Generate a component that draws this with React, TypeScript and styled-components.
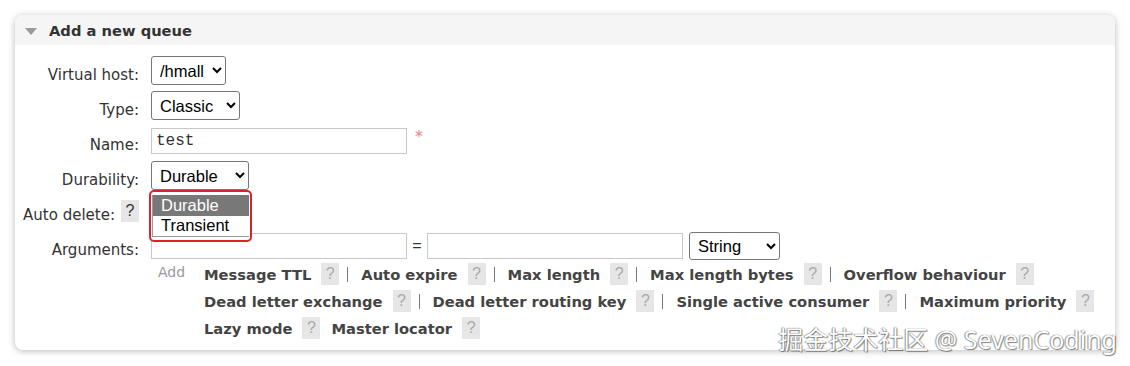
import styled, { createGlobalStyle } from 'styled-components'

const GlobalStyle = createGlobalStyle`
  html, body {
    margin: 0;
    background: #fff;
  }
  body {
    font-family: "DejaVu Sans", Verdana, sans-serif;
    color: #333;
  }
`

interface ArgLine {
    names: string[];
    sep: boolean;
}

const argLines: ArgLine[] = [
    { names: ['Message TTL', 'Auto expire', 'Max length', 'Max length bytes', 'Overflow behaviour'], sep: true },
    { names: ['Dead letter exchange', 'Dead letter routing key', 'Single active consumer', 'Maximum priority'], sep: true },
    { names: ['Lazy mode', 'Master locator'], sep: false },
]

function App() {
    return (
        <Page>
            <GlobalStyle />
            <Card>
                <Header>
                    <Triangle />
                    <HeaderTitle>Add a new queue</HeaderTitle>
                </Header>

                <Body>
                    <Row>
                        <Label>Virtual host:</Label>
                        <Select $width={75} defaultValue="/hmall">
                            <option>/hmall</option>
                        </Select>
                    </Row>

                    <Row>
                        <Label>Type:</Label>
                        <Select $width={89} defaultValue="Classic">
                            <option>Classic</option>
                            <option>Quorum</option>
                            <option>Stream</option>
                        </Select>
                    </Row>

                    <Row>
                        <Label>Name:</Label>
                        <TextInput defaultValue="test" $mono />
                        <Required>*</Required>
                    </Row>

                    <Row>
                        <Label>Durability:</Label>
                        <DropWrap>
                            <Select $width={98} defaultValue="Durable">
                                <option>Durable</option>
                                <option>Transient</option>
                            </Select>
                            <Popup>
                                <OptionList>
                                    <Option $active>Durable</Option>
                                    <Option>Transient</Option>
                                </OptionList>
                            </Popup>
                        </DropWrap>
                    </Row>

                    <Row>
                        <Label>
                            Auto delete:
                            <Help $inLabel>?</Help>
                        </Label>
                        <Select $width={60} defaultValue="No">
                            <option>No</option>
                            <option>Yes</option>
                        </Select>
                    </Row>

                    <Row>
                        <Label>Arguments:</Label>
                        <TextInput />
                        <Equals>=</Equals>
                        <TextInput />
                        <Select $width={91} $gap={6} defaultValue="String">
                            <option>String</option>
                            <option>Number</option>
                            <option>Boolean</option>
                            <option>List</option>
                        </Select>
                    </Row>

                    <AddSection>
                        <AddLabel>Add</AddLabel>
                        <ArgList>
                            {argLines.map((line, i) => (
                                <ArgRow key={i}>
                                    {line.names.map((name, j) => (
                                        <ArgItem key={name} $spaced={!line.sep && j > 0}>
                                            {line.sep && j > 0 && <Sep />}
                                            <ArgName>{name}</ArgName>
                                            <Help>?</Help>
                                        </ArgItem>
                                    ))}
                                </ArgRow>
                            ))}
                        </ArgList>
                    </AddSection>
                </Body>
            </Card>

            <Watermark>掘金技术社区 @ SevenCoding</Watermark>
        </Page>
    )
}

export default App

const Page = styled.div`
    position: relative;
    width: 1130px;
    height: 366px;
    box-sizing: border-box;
    padding: 15px;
`

const Card = styled.div`
    width: 1100px;
    border-radius: 8px;
    background: #fff;
    box-shadow: 0 1px 7px rgba(0, 0, 0, 0.28);
`

const Header = styled.div`
    height: 30px;
    display: flex;
    align-items: center;
    gap: 12px;
    padding-left: 10px;
    background: #f5f5f5;
    border-radius: 8px 8px 0 0;
`

const Triangle = styled.span`
    width: 0;
    height: 0;
    border-left: 6px solid transparent;
    border-right: 6px solid transparent;
    border-top: 7px solid #9a9a9a;
    margin-top: 2px;
`

const HeaderTitle = styled.span`
    font-weight: bold;
    font-size: 14.7px;
    color: #333;
`

const Body = styled.div`
    padding: 8px 0 6px 0;
`

const Row = styled.div`
    height: 35px;
    display: flex;
    align-items: center;
`

const Label = styled.div`
    width: 124px;
    margin-right: 12px;
    padding-top: 8px;
    box-sizing: border-box;
    display: flex;
    justify-content: flex-end;
    align-items: center;
    font-size: 15px;
    color: #333;
    white-space: nowrap;
`

const Select = styled.select<{ $width: number; $gap?: number }>`
    width: ${p => p.$width}px;
    height: ${p => (p.$gap ? 28 : 29)}px;
    margin-left: ${p => p.$gap ?? 0}px;
    font-family: "Liberation Sans", Arial, sans-serif;
    font-size: 16.5px;
    color: #000;
    background: #fff;
    border: 1px solid #767676;
    border-radius: 3px;
    padding: 0 4px;
`

const TextInput = styled.input<{ $mono?: boolean }>`
    width: 256px;
    height: 26px;
    box-sizing: border-box;
    border: 1px solid #c8c8c8;
    padding: 0 4px;
    font-family: ${p => (p.$mono ? '"Liberation Mono", "Courier New", monospace' : '"Liberation Sans", Arial, sans-serif')};
    font-size: 16px;
    color: #333;
    outline: none;
`

const Required = styled.span`
    margin-left: 8px;
    margin-top: -8px;
    color: #f08080;
    font-size: 16px;
`

const Equals = styled.span`
    width: 20px;
    text-align: center;
    font-family: "Liberation Sans", Arial, sans-serif;
    font-size: 16px;
    color: #333;
`

const DropWrap = styled.div`
    position: relative;
    display: flex;
`

const Popup = styled.div`
    position: absolute;
    top: 100%;
    left: -2px;
    z-index: 10;
    width: 103px;
    height: 52px;
    box-sizing: border-box;
    border: 2px solid #d8232a;
    border-radius: 5px;
    background: #fff;
    padding: 3px 1px 3px 1px;
`

const OptionList = styled.div`
    border-left: 1px solid #9a9a9a;
    border-bottom: 1px solid #9a9a9a;
    display: flex;
    flex-direction: column;
`

const Option = styled.div<{ $active?: boolean }>`
    height: 20.5px;
    display: flex;
    align-items: center;
    padding-left: 8px;
    font-family: "Liberation Sans", Arial, sans-serif;
    font-size: 16.5px;
    color: ${p => (p.$active ? '#fff' : '#000')};
    background: ${p => (p.$active ? '#787878' : '#fff')};
`

const Help = styled.span<{ $inLabel?: boolean }>`
    display: inline-flex;
    align-items: center;
    justify-content: center;
    width: 18px;
    height: 22px;
    margin-left: ${p => (p.$inLabel ? 6 : 10)}px;
    margin-top: ${p => (p.$inLabel ? -7 : 0)}px;
    background: #e6e6e6;
    color: ${p => (p.$inLabel ? '#333' : '#aaa')};
    font-weight: normal;
    font-family: "Liberation Sans", Arial, sans-serif;
    font-size: 16px;
`

const AddSection = styled.div`
    display: flex;
    padding-left: 143px;
`

const AddLabel = styled.span`
    width: 46px;
    height: 22px;
    font-size: 14px;
    color: #999;
    padding-top: 1px;
`

const ArgList = styled.div`
    display: flex;
    flex-direction: column;
`

const ArgRow = styled.div`
    height: 27px;
    display: flex;
    align-items: flex-start;
`

const ArgItem = styled.span<{ $spaced?: boolean }>`
    display: flex;
    align-items: center;
    margin-left: ${p => (p.$spaced ? 11 : 0)}px;
`

const ArgName = styled.span`
    font-weight: bold;
    font-size: 14.7px;
    color: #444;
`

const Sep = styled.span`
    width: 0;
    height: 15px;
    margin: 0 13px 0 8px;
    border-left: 1px solid #777;
`

const Watermark = styled.div`
    position: absolute;
    right: 13px;
    bottom: 14px;
    font-family: "Noto Sans", "Noto Sans CJK SC", sans-serif;
    font-size: 25px;
    line-height: 1;
    color: #fff;
    text-shadow: 0 0 1px #555, 1px 1px 1px rgba(0, 0, 0, 0.45), -1px 0 1px rgba(0, 0, 0, 0.3);
    white-space: nowrap;
`
